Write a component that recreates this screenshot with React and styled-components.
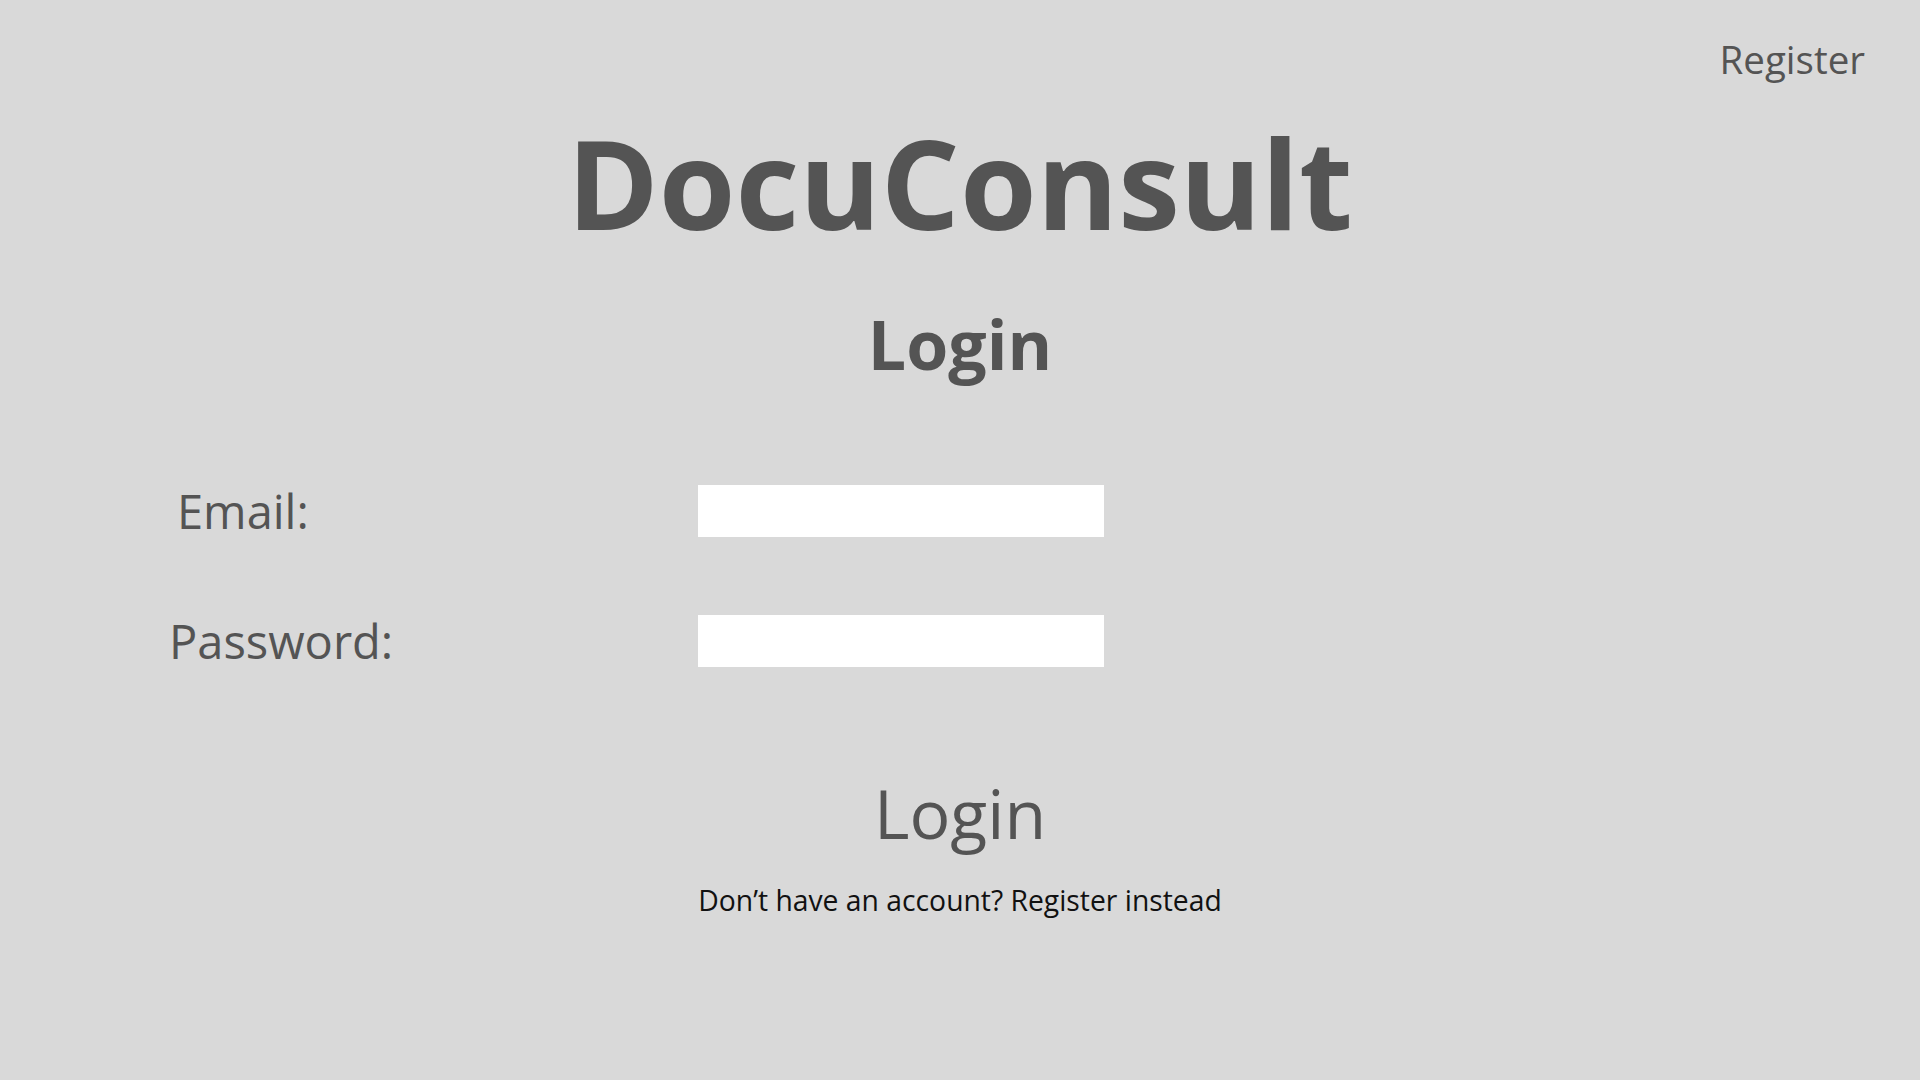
import React from "react";
import styled, { createGlobalStyle } from "styled-components";

const GlobalStyle = createGlobalStyle`
  html, body {
    margin: 0;
    padding: 0;
    background: #d9d9d9;
  }
  body {
    font-family: "Open Sans", "Liberation Sans", sans-serif;
    color: #545454;
  }
  * { box-sizing: border-box; }
`;

const Page = styled.div`
  min-height: 100vh;
  display: flex;
  flex-direction: column;
  background: #d9d9d9;
`;

const TopBar = styled.header`
  display: flex;
  justify-content: flex-end;
  padding: 40px 55px 0 0;
`;

const NavLink = styled.a`
  font-size: 38.5px;
  line-height: 1;
  color: #545454;
  text-decoration: none;
  cursor: pointer;
`;

const Title = styled.h1`
  margin: 41px 0 0;
  text-align: center;
  font-size: 124px;
  line-height: 1;
  font-weight: 700;
  color: #545454;
`;

const Heading = styled.h2`
  margin: 66px 0 0;
  text-align: center;
  font-size: 68px;
  line-height: 1;
  font-weight: 700;
  color: #545454;
`;

const Form = styled.form`
  margin-top: 107px;
  display: flex;
  flex-direction: column;
`;

const Fields = styled.div`
  display: grid;
  grid-template-columns: 529px 406px;
  row-gap: 78px;
  padding-left: 169px;
`;

const Label = styled.label`
  margin: 3px 0 0 ${(p) => p.$indent || 0}px;
  font-size: 47px;
  line-height: 1;
  color: #545454;
`;

const Input = styled.input`
  width: 406px;
  height: 52px;
  border: none;
  outline: none;
  background: #ffffff;
  padding: 0 12px;
  font-family: inherit;
  font-size: 24px;
  color: #333;
`;

const SubmitButton = styled.button`
  align-self: center;
  margin-top: 112px;
  padding: 0;
  border: none;
  background: transparent;
  font-family: "Open Sans", "Liberation Sans", sans-serif;
  font-size: 68px;
  line-height: 1;
  font-weight: 400;
  color: #545454;
  cursor: pointer;
`;

const Footnote = styled.p`
  margin: 39px 0 0;
  text-align: center;
  font-size: 28.3px;
  line-height: 1;
  color: #111111;
`;

export default function App() {
  return (
    <Page>
      <GlobalStyle />
      <TopBar>
        <NavLink>Register</NavLink>
      </TopBar>
      <Title>DocuConsult</Title>
      <Heading>Login</Heading>
      <Form onSubmit={(e) => e.preventDefault()}>
        <Fields>
          <Label htmlFor="email" $indent={8}>Email:</Label>
          <Input id="email" type="email" />
          <Label htmlFor="password">Password:</Label>
          <Input id="password" type="password" />
        </Fields>
        <SubmitButton type="submit">Login</SubmitButton>
      </Form>
      <Footnote>Don’t have an account? Register instead</Footnote>
    </Page>
  );
}
